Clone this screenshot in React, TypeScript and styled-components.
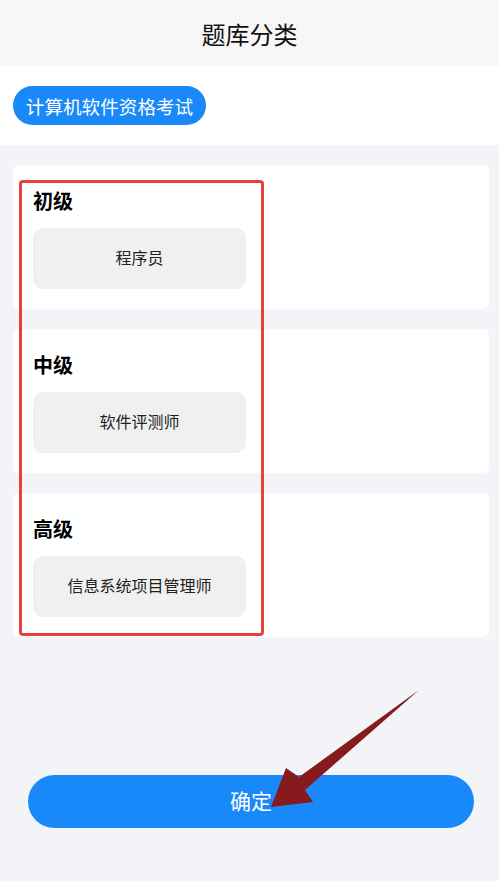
import { FC } from "react";
import styled, { createGlobalStyle } from "styled-components";

const GlobalStyle = createGlobalStyle`
  html, body {
    margin: 0;
    padding: 0;
    background: #f2f4f7;
    font-family: "Noto Sans CJK SC", "Noto Sans", sans-serif;
  }
`;

const levels = [
  { title: "初级", items: ["程序员"] },
  { title: "中级", items: ["软件评测师"] },
  { title: "高级", items: ["信息系统项目管理师"] },
];

const App: FC = () => {
  return (
    <StyledPage>
      <GlobalStyle />
      <StyledHeader>题库分类</StyledHeader>
      <StyledChipBar>
        <StyledChip>计算机软件资格考试</StyledChip>
      </StyledChipBar>
      <StyledList>
        {levels.map((level) => (
          <StyledCard key={level.title}>
            <StyledCardTitle>{level.title}</StyledCardTitle>
            {level.items.map((item) => (
              <StyledItem key={item}>{item}</StyledItem>
            ))}
          </StyledCard>
        ))}
      </StyledList>
      <StyledConfirm>确定</StyledConfirm>

      <StyledHighlight />
      <StyledArrow viewBox="0 0 499 881" width="499" height="881">
        <polygon
          points="419,690 299,777 286,768 271,807 313,802 305,790"
          fill="#861a1c"
        />
      </StyledArrow>
    </StyledPage>
  );
};

const StyledPage = styled.div`
  position: relative;
  width: 499px;
  min-height: 881px;
  background: #f2f4f7;
  overflow: hidden;
`;

const StyledHeader = styled.div`
  height: 66px;
  display: flex;
  align-items: center;
  justify-content: center;
  background: #f7f7f7;
  color: #111;
  font-size: 24px;
`;

const StyledChipBar = styled.div`
  display: flex;
  background: #fff;
  padding: 20px 13px;
`;

const StyledChip = styled.div`
  height: 39px;
  width: 193px;
  box-sizing: border-box;
  display: flex;
  align-items: center;
  justify-content: center;
  border-radius: 20px;
  background: #1989fa;
  color: #fff;
  font-size: 18.6px;
  white-space: nowrap;
`;

const StyledList = styled.div`
  display: flex;
  flex-direction: column;
  gap: 20px;
  padding: 20px 10px 0 13px;
`;

const StyledCard = styled.div`
  background: #fff;
  border-radius: 6px;
  padding: 22px 20px 20px;
  height: 144px;
  box-sizing: border-box;
`;

const StyledCardTitle = styled.div`
  font-size: 20px;
  font-weight: 700;
  line-height: 28px;
  color: #000;
  margin-bottom: 13px;
`;

const StyledItem = styled.div`
  width: 213px;
  height: 61px;
  box-sizing: border-box;
  padding-bottom: 3px;
  display: flex;
  align-items: center;
  justify-content: center;
  border-radius: 10px;
  background: #f0f0f0;
  color: #222;
  font-size: 16px;
`;

const StyledConfirm = styled.button`
  display: flex;
  align-items: center;
  justify-content: center;
  width: 446px;
  height: 53px;
  margin: 138px 0 0 28px;
  padding: 0 0 3px;
  border: none;
  border-radius: 27px;
  background: #1989fa;
  color: #fff;
  font-family: inherit;
  font-size: 21px;
`;

const StyledHighlight = styled.div`
  position: absolute;
  left: 19px;
  top: 180px;
  width: 245px;
  height: 456px;
  box-sizing: border-box;
  border: 3px solid #e8403f;
  border-radius: 4px;
  pointer-events: none;
`;

const StyledArrow = styled.svg`
  position: absolute;
  left: 0;
  top: 0;
  pointer-events: none;
`;

export default App;
